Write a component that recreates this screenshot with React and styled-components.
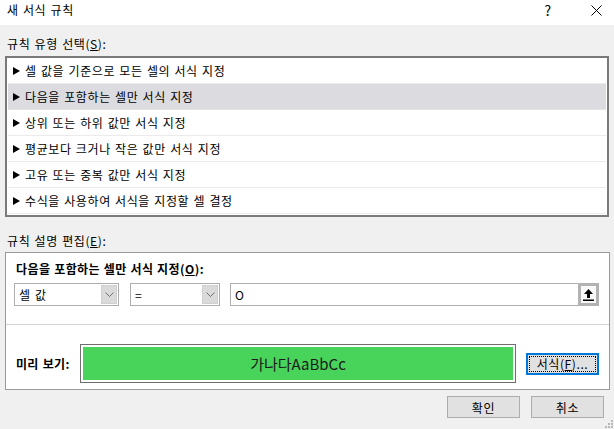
import React from "react"
import styled, { createGlobalStyle } from "styled-components"

const GlobalStyle = createGlobalStyle`
  html, body {
    margin: 0;
    padding: 0;
    background: #f0f0f0;
  }
  body {
    font-family: "Noto Sans CJK KR", "Liberation Sans", sans-serif;
    font-size: 12px;
    letter-spacing: 0.6px;
    word-spacing: 1px;
    color: #000;
  }
`

const Window = styled.div`
  position: relative;
  width: 614px;
  height: 429px;
  background: #f0f0f0;
  overflow: hidden;
`

const TitleBar = styled.div`
  height: 25px;
  background: #fff;
  display: flex;
  align-items: flex-start;
  padding-left: 7px;
`

const Title = styled.div`
  line-height: 20px;
  flex: 1;
`

const TitleButton = styled.div`
  width: ${p => p.$w}px;
  height: 20px;
  display: flex;
  align-items: center;
  justify-content: center;
  font-size: 14px;
`

const Body = styled.div`
  padding: 0 5px;
`

const Label = styled.div`
  padding: ${p => p.$top}px 2px ${p => p.$bottom}px;
  line-height: 16px;
  font-weight: ${p => (p.$bold ? 700 : 400)};
  letter-spacing: ${p => (p.$bold ? "0.45px" : "0.6px")};
  word-spacing: ${p => (p.$bold ? "0.5px" : "1px")};
`

const Key = styled.span`
  text-decoration: underline;
  text-underline-offset: 1px;
`

const ListBox = styled.div`
  width: 604px;
  height: 161px;
  box-sizing: border-box;
  border: 2px solid #7a7a7a;
  background: #fff;
  padding: 0 1px;
`

const Row = styled.div`
  height: 25px;
  display: flex;
  align-items: center;
  gap: 5px;
  padding-left: 5px;
  border-bottom: 1px solid ${p => (p.$selected ? "#e4e4e8" : "#ebebeb")};
  background: ${p => (p.$selected ? "#dcdce0" : "#fff")};
`

const Arrow = () => (
  <svg width="7" height="8" viewBox="0 0 7 8">
    <path d="M0 0 L7 4 L0 8 Z" fill="#000" />
  </svg>
)

const Panel = styled.div`
  width: 605px;
  box-sizing: border-box;
  border: 1px solid #9a9a9a;
  background: #fff;
`

const Upper = styled.div`
  padding: 0 8px 18px;
  border-bottom: 1px solid #d2d2d2;
`

const Controls = styled.div`
  display: flex;
  margin-top: 6px;
`

const Combo = styled.div`
  width: ${p => p.$w}px;
  height: 23px;
  box-sizing: border-box;
  border: 1px solid #adadad;
  background: #fff;
  display: flex;
  align-items: center;
  margin-right: ${p => p.$mr || 0}px;
`

const ComboText = styled.div`
  flex: 1;
  padding-left: 4px;
  line-height: 20px;
`

const ComboButton = styled.div`
  width: 16px;
  height: 19px;
  margin-right: 1px;
  box-sizing: border-box;
  background: #dadada;
  border: 1px solid #cfcfcf;
  display: flex;
  align-items: center;
  justify-content: center;
`

const Chevron = () => (
  <svg width="9" height="5" viewBox="0 0 9 5">
    <path d="M0.5 0.5 L4.5 4.5 L8.5 0.5" fill="none" stroke="#707070" strokeWidth="1" />
  </svg>
)

const RefButton = styled.div`
  width: 21px;
  height: 23px;
  box-sizing: border-box;
  border: 3px solid #b2b2b2;
  background: #f9f9f9;
  display: flex;
  align-items: center;
  justify-content: center;
  margin: -1px -1px -1px 0;
`

const UploadIcon = () => (
  <svg width="11" height="13" viewBox="0 0 11 13">
    <path d="M5.5 1 L10 6 L7 6 L7 10 L4 10 L4 6 L1 6 Z" fill="#000" />
    <rect x="0" y="11.5" width="11" height="1.5" fill="#000" />
  </svg>
)

const Lower = styled.div`
  display: flex;
  align-items: center;
  padding: 19px 0 6px 10px;
`

const PreviewLabel = styled.div`
  width: 64px;
  font-weight: 700;
  line-height: 16px;
  letter-spacing: 0.3px;
`

const Preview = styled.div`
  width: 436px;
  height: 39px;
  box-sizing: border-box;
  border: 1px solid #6e6e6e;
  padding: 2px;
  background: #fff;
  margin-right: 10px;
`

const Swatch = styled.div`
  height: 100%;
  background: #48d35b;
  display: flex;
  align-items: center;
  justify-content: center;
  font-size: 15px;
  letter-spacing: 0;
  color: #1a1a1a;
`

const Button = styled.div`
  width: 73px;
  height: 22px;
  box-sizing: border-box;
  background: #e1e1e1;
  border: 1px solid ${p => (p.$focus ? "#0078d7" : "#adadad")};
  box-shadow: ${p => (p.$focus ? "inset 0 0 0 1px #0078d7" : "none")};
  display: flex;
  align-items: center;
  justify-content: center;
  padding: 2px;
`

const FocusRect = styled.div`
  flex: 1;
  align-self: stretch;
  display: flex;
  align-items: center;
  justify-content: center;
  border: 1px dotted #000;
`

const Footer = styled.div`
  display: flex;
  justify-content: flex-end;
  gap: 11px;
  padding: 6px 10px 0 0;
`

const Grip = styled.svg`
  position: absolute;
  right: 1px;
  bottom: 1px;
`

const rules = [
  "셀 값을 기준으로 모든 셀의 서식 지정",
  "다음을 포함하는 셀만 서식 지정",
  "상위 또는 하위 값만 서식 지정",
  "평균보다 크거나 작은 값만 서식 지정",
  "고유 또는 중복 값만 서식 지정",
  "수식을 사용하여 서식을 지정할 셀 결정",
]

export default function App() {
  return (
    <Window>
      <GlobalStyle />
      <TitleBar>
        <Title>새 서식 규칙</Title>
        <TitleButton $w={62}>?</TitleButton>
        <TitleButton $w={35}>
          <svg width="11" height="11" viewBox="0 0 11 11">
            <path d="M0.5 0.5 L10.5 10.5 M10.5 0.5 L0.5 10.5" stroke="#000" strokeWidth="1" />
          </svg>
        </TitleButton>
      </TitleBar>
      <Body>
        <Label $top={11} $bottom={4}>
          규칙 유형 선택(<Key>S</Key>):
        </Label>
        <ListBox>
          {rules.map((r, i) => (
            <Row key={r} $selected={i === 1}>
              <Arrow />
              {r}
            </Row>
          ))}
        </ListBox>
        <Label $top={16} $bottom={3}>
          규칙 설명 편집(<Key>E</Key>):
        </Label>
        <Panel>
          <Upper>
            <Label $top={8} $bottom={0} $bold>
              다음을 포함하는 셀만 서식 지정(<Key>O</Key>):
            </Label>
            <Controls>
              <Combo $w={105} $mr={11}>
                <ComboText>셀 값</ComboText>
                <ComboButton>
                  <Chevron />
                </ComboButton>
              </Combo>
              <Combo $w={90} $mr={10}>
                <ComboText>=</ComboText>
                <ComboButton>
                  <Chevron />
                </ComboButton>
              </Combo>
              <Combo $w={369}>
                <ComboText>O</ComboText>
                <RefButton>
                  <UploadIcon />
                </RefButton>
              </Combo>
            </Controls>
          </Upper>
          <Lower>
            <PreviewLabel>미리 보기:</PreviewLabel>
            <Preview>
              <Swatch>가나다AaBbCc</Swatch>
            </Preview>
            <Button $focus>
              <FocusRect>
                서식(<Key>F</Key>)...
              </FocusRect>
            </Button>
          </Lower>
        </Panel>
      </Body>
      <Footer>
        <Button>확인</Button>
        <Button>취소</Button>
      </Footer>
      <Grip width="8" height="8" viewBox="0 0 8 8">
        {[[6, 0], [6, 3], [3, 3], [6, 6], [3, 6], [0, 6]].map(([x, y]) => (
          <rect key={`${x}-${y}`} x={x} y={y} width="2" height="2" fill="#b8b8b8" />
        ))}
      </Grip>
    </Window>
  )
}
